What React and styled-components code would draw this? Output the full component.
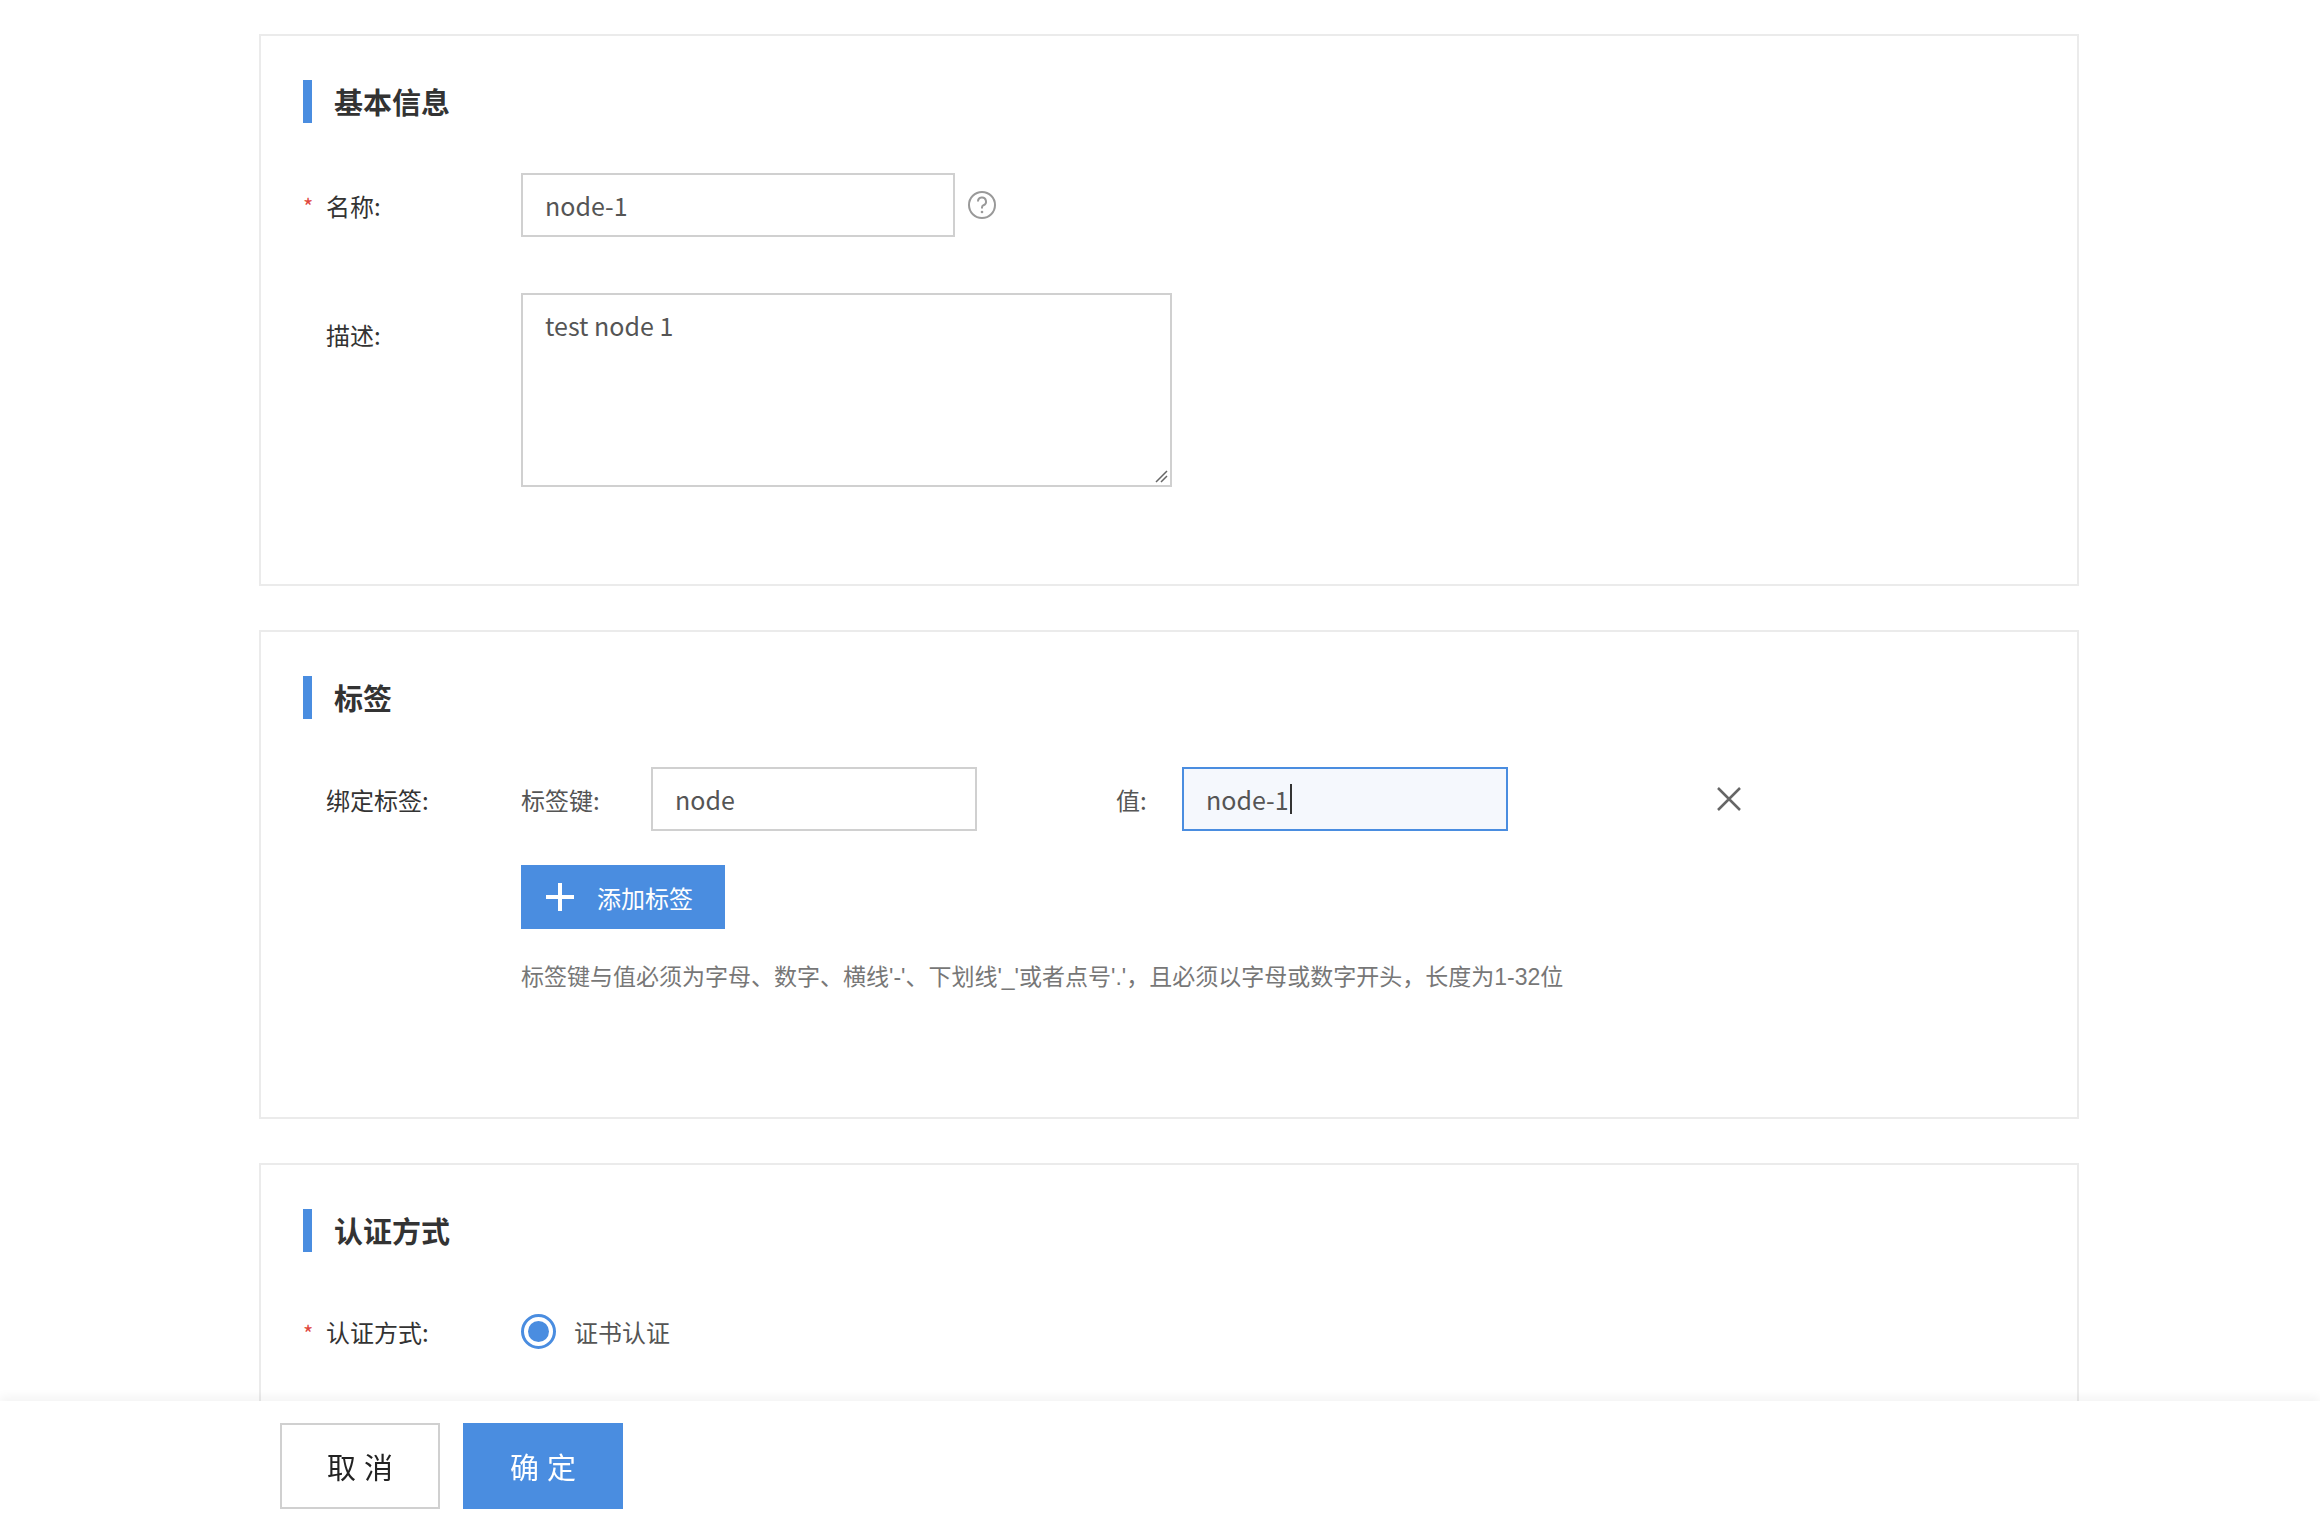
import React from "react";
import styled, { createGlobalStyle } from "styled-components";

const Global = createGlobalStyle`
  html, body { margin: 0; padding: 0; background: #fff; }
  body { font-family: "Noto Sans CJK SC", "Noto Sans", sans-serif; color: #333; }
  * { box-sizing: border-box; }
`;

const Page = styled.div`
  padding: 34px 0 200px 259px;
  display: flex;
  flex-direction: column;
  gap: 44px;
`;

const Card = styled.section`
  width: 1820px;
  border: 2px solid #ebebeb;
  padding: 44px 42px ${p => p.$pb}px;
  display: flex;
  flex-direction: column;
`;

const Title = styled.h2`
  margin: 0;
  height: 43px;
  border-left: 9px solid #4a8de0;
  padding-left: 22px;
  font-size: 29px;
  font-weight: 700;
  line-height: 43px;
  color: #333;
`;

const Row = styled.div`
  display: flex;
  align-items: ${p => (p.$top ? "flex-start" : "center")};
  margin-top: ${p => p.$mt}px;
`;

const Label = styled.div`
  width: 218px;
  flex: none;
  font-size: 24px;
  color: #333;
  display: flex;
  align-items: center;
  padding-top: ${p => (p.$top ? 24 : 0)}px;
`;

const Star = styled.span`
  width: 23px;
  color: #e0483e;
  font-size: 22px;
`;

const Input = styled.div`
  width: ${p => p.$w}px;
  height: 64px;
  border: 2px solid ${p => (p.$focus ? "#4a8de0" : "#d0d0d0")};
  background: ${p => (p.$focus ? "#f5f8fd" : "#fff")};
  padding: 0 22px;
  display: flex;
  align-items: center;
  font-size: 25px;
  color: #555;
`;

const Caret = styled.span`
  display: inline-block;
  width: 2px;
  height: 30px;
  background: #333;
  margin-left: 1px;
`;

const TextArea = styled.div`
  width: 651px;
  height: 194px;
  border: 2px solid #d0d0d0;
  padding: 12px 22px;
  font-size: 25px;
  color: #555;
  position: relative;
`;

const Grip = styled.svg`
  position: absolute;
  right: 2px;
  bottom: 2px;
`;

const SubLabel = styled.span`
  font-size: 24px;
  color: #555;
  width: 130px;
  flex: none;
`;

const ValueLabel = styled(SubLabel)`
  margin-left: 139px;
  width: 66px;
`;

const Indent = styled.div`
  margin-left: 218px;
  display: flex;
  flex-direction: column;
  align-items: flex-start;
`;

const AddBtn = styled.button`
  margin-top: 34px;
  width: 204px;
  height: 64px;
  border: none;
  background: #4a8de0;
  color: #fff;
  font-family: inherit;
  font-size: 24px;
  display: flex;
  align-items: center;
  padding: 0 0 0 24px;
  gap: 22px;
`;

const Hint = styled.p`
  margin: 33px 0 0;
  font-family: "Liberation Sans", "Noto Sans CJK SC", sans-serif;
  font-size: 23px;
  color: #777;
  line-height: 30px;
`;

const Radio = styled.span`
  width: 35px;
  height: 35px;
  border-radius: 50%;
  border: 3px solid #4a8de0;
  display: flex;
  align-items: center;
  justify-content: center;
  &::after { content: ""; width: 21px; height: 21px; border-radius: 50%; background: #4a8de0; }
`;

const RadioText = styled.span`
  margin-left: 18px;
  font-size: 24px;
  color: #555;
`;

const Footer = styled.footer`
  position: fixed;
  left: 0; right: 0; bottom: 0;
  height: 117px;
  background: #fff;
  box-shadow: 0 -4px 10px rgba(0,0,0,0.05);
  display: flex;
  align-items: flex-start;
  padding: 22px 0 0 280px;
  gap: 23px;
`;

const Btn = styled.button`
  width: 160px;
  height: 86px;
  font-family: inherit;
  font-size: 29px;
  letter-spacing: 8px;
  text-indent: 8px;
  border: 2px solid ${p => (p.$primary ? "#4a8de0" : "#d0d0d0")};
  background: ${p => (p.$primary ? "#4a8de0" : "#fff")};
  color: ${p => (p.$primary ? "#fff" : "#222")};
`;

export default function App() {
  return (
    <>
      <Global />
      <Page>
        <Card $pb={97}>
          <Title>基本信息</Title>
          <Row $mt={50}>
            <Label><Star>*</Star>名称:</Label>
            <Input $w={434}>node-1</Input>
            <svg width="30" height="30" viewBox="0 0 30 30" style={{ marginLeft: 12 }}>
              <circle cx="15" cy="15" r="13" fill="none" stroke="#999" strokeWidth="2" />
              <path d="M11 11.5a4 4 0 1 1 5.5 3.7c-1 .5-1.5 1.2-1.5 2.3v1" fill="none" stroke="#999" strokeWidth="2" />
              <circle cx="15" cy="22" r="1.3" fill="#999" />
            </svg>
          </Row>
          <Row $mt={56} $top>
            <Label $top><Star />描述:</Label>
            <TextArea>
              test node 1
              <Grip width="14" height="14" viewBox="0 0 14 14">
                <path d="M2 13L13 2M7 13L13 7" stroke="#666" strokeWidth="1.5" />
              </Grip>
            </TextArea>
          </Row>
        </Card>
        <Card $pb={125}>
          <Title>标签</Title>
          <Row $mt={48}>
            <Label><Star />绑定标签:</Label>
            <SubLabel>标签键:</SubLabel>
            <Input $w={326}>node</Input>
            <ValueLabel>值:</ValueLabel>
            <Input $w={326} $focus>node-1<Caret /></Input>
            <svg width="26" height="26" viewBox="0 0 26 26" style={{ marginLeft: 208 }}>
              <path d="M2 2L24 24M24 2L2 24" stroke="#666" strokeWidth="2.5" />
            </svg>
          </Row>
          <Indent>
            <AddBtn>
              <svg width="30" height="30" viewBox="0 0 30 30">
                <path d="M15 1V29M1 15H29" stroke="#fff" strokeWidth="4" />
              </svg>
              添加标签
            </AddBtn>
            <Hint>标签键与值必须为字母、数字、横线'-'、下划线'_'或者点号'.'，且必须以字母或数字开头，长度为1-32位</Hint>
          </Indent>
        </Card>
        <Card $pb={120}>
          <Title>认证方式</Title>
          <Row $mt={62}>
            <Label><Star>*</Star>认证方式:</Label>
            <Radio />
            <RadioText>证书认证</RadioText>
          </Row>
        </Card>
      </Page>
      <Footer>
        <Btn>取消</Btn>
        <Btn $primary>确定</Btn>
      </Footer>
    </>
  );
}
